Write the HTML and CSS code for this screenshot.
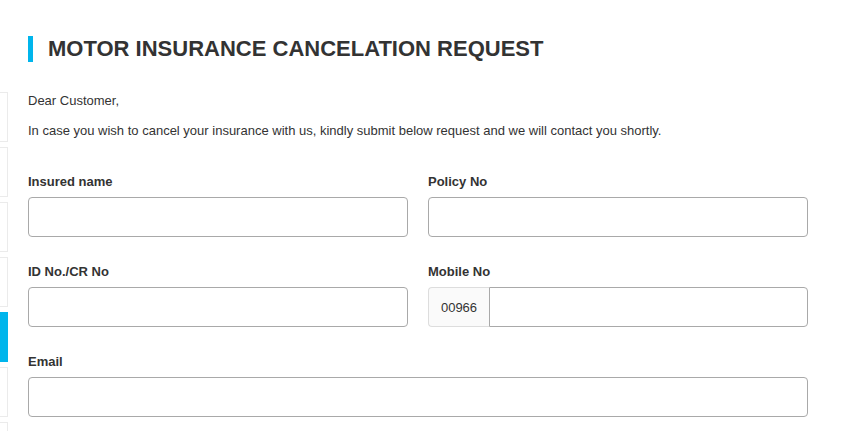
FILE: index.html
```html
<!DOCTYPE html>
<html>
<head>
<meta charset="utf-8">
<link rel="stylesheet" href="styles.css">
</head>
<body>
<div class="page">
  <aside class="sidebar">
    <div class="tab"></div>
    <div class="tab"></div>
    <div class="tab"></div>
    <div class="tab"></div>
    <div class="tab active"></div>
    <div class="tab"></div>
    <div class="tab"></div>
  </aside>
  <main class="main">
    <h1 class="title">MOTOR INSURANCE CANCELATION REQUEST</h1>
    <p class="intro">Dear Customer,</p>
    <p class="intro">In case you wish to cancel your insurance with us, kindly submit below request and we will contact you shortly.</p>
    <form class="form">
      <div class="field">
        <label class="label">Insured name</label>
        <input class="input" type="text">
      </div>
      <div class="field">
        <label class="label">Policy No</label>
        <input class="input" type="text">
      </div>
      <div class="field">
        <label class="label">ID No./CR No</label>
        <input class="input" type="text">
      </div>
      <div class="field">
        <label class="label">Mobile No</label>
        <div class="group">
          <span class="prefix">00966</span>
          <input class="input group-input" type="text">
        </div>
      </div>
      <div class="field wide">
        <label class="label">Email</label>
        <input class="input" type="text">
      </div>
    </form>
  </main>
</div>
</body>
</html>
```
FILE: styles.css
```css
html, body {
  margin: 0;
  padding: 0;
  background: #fff;
}
body {
  font-family: "Liberation Sans", Arial, sans-serif;
  color: #333;
  overflow: hidden;
  height: 431px;
}
.page {
  display: flex;
  align-items: flex-start;
}
.sidebar {
  width: 8px;
  margin-top: 92px;
  display: flex;
  flex-direction: column;
  gap: 5px;
  flex-shrink: 0;
}
.tab {
  height: 48px;
  border: 1px solid #ebebeb;
  border-left: none;
}
.tab.active {
  background: #00b5ec;
  border-color: #00b5ec;
}
.main {
  padding-left: 20px;
  padding-top: 36px;
  width: 780px;
}
.title {
  margin: 0 0 30px;
  height: 26px;
  line-height: 26px;
  border-left: 5px solid #00b5ec;
  padding-left: 15px;
  font-size: 22px;
  font-weight: bold;
  color: #333;
}
.intro {
  margin: 0 0 12px;
  font-size: 13px;
  line-height: 18px;
}
.form {
  margin-top: 33px;
  display: grid;
  grid-template-columns: 380px 380px;
  column-gap: 20px;
  row-gap: 26px;
}
.field {
  display: flex;
  flex-direction: column;
  gap: 6px;
}
.field.wide {
  grid-column: 1 / span 2;
}
.label {
  font-size: 13px;
  font-weight: bold;
  line-height: 18px;
}
.input {
  box-sizing: border-box;
  height: 40px;
  width: 100%;
  border: 1px solid #a9a9a9;
  border-radius: 4px;
  margin: 0;
  background: #fff;
}
.group {
  display: flex;
  height: 40px;
}
.prefix {
  box-sizing: border-box;
  width: 61px;
  height: 40px;
  display: flex;
  align-items: center;
  justify-content: center;
  font-size: 13px;
  color: #333;
  background: #fafafa;
  border: 1px solid #ddd;
  border-right: none;
  border-radius: 4px 0 0 4px;
}
.group-input {
  flex: 1;
  width: auto;
  border-radius: 0 4px 4px 0;
}
```
